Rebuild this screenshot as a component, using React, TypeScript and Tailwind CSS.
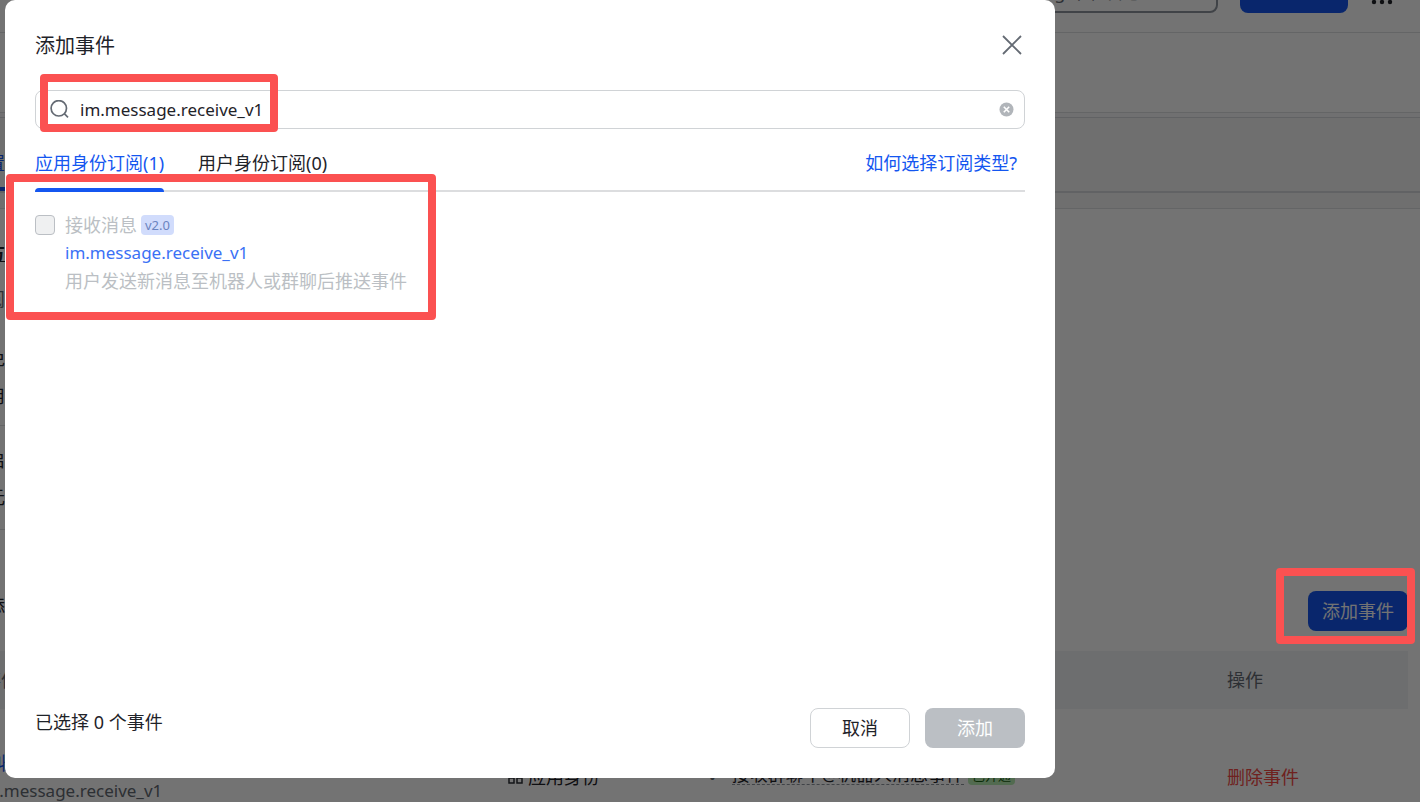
import React, { useState } from "react";

const Frame = ({ className }: { className: string }) => (
  <div aria-hidden="true" className={`pointer-events-none absolute rounded border-8 border-[#fb5151] ${className}`} />
);

function BackgroundPage() {
  return (
    <div className="-ml-[33px] flex min-h-screen flex-col text-[18px] leading-7 text-[#1f2329]">
      <header className="-mt-7 flex h-[61px] shrink-0 items-start justify-end border-b border-[#dee0e3] pr-6">
        <div className="flex h-[41px] w-[280px] items-center rounded-lg border-2 border-[#8f959e] px-3 pb-0.5 text-[#646a73]">
          <span className="flex-1 pl-[80px] whitespace-nowrap">bug 单和日志</span>
        </div>
        <button className="ml-[22px] h-[41px] w-[108px] rounded-lg bg-[#1456f0] pb-1 text-white">创建新版本</button>
        <button aria-label="更多" className="ml-5 flex h-[60px] w-7 items-center justify-center">
          <svg width="22" height="6" viewBox="0 0 22 6" fill="#1f2329">
            <circle cx="3" cy="3" r="2.2" />
            <circle cx="11" cy="3" r="2.2" />
            <circle cx="19" cy="3" r="2.2" />
          </svg>
        </button>
      </header>
      <div className="h-20 shrink-0 border-b border-[#dee0e3]" />
      <div className="h-1 shrink-0 bg-[#f8f9fa]" />
      <nav className="flex h-[76px] shrink-0 items-end border-y border-b-2 border-[#d8dadd] bg-[#f7f7f7] pl-0.5">
        <a href="#events" className="flex h-[42px] items-start border-b-4 border-[#1456f0] text-[#1456f0]">配置</a>
      </nav>
      <div className="h-4 shrink-0 border-b border-[#dee0e3] bg-[#f7f7f7]" />
      <main className="flex flex-1 flex-col pr-3">
        <div className="flex h-[442px] items-end justify-between pb-5">
          <div className="flex h-full flex-col self-start pt-[30px] pl-5 whitespace-nowrap">
            <h2 className="h-[46px] font-bold underline">方式</h2>
            <p className="h-[59px] text-[#646a73]">阅读</p>
            <p className="h-[38px]">免登</p>
            <p className="h-[43px]">用户</p>
            <p className="h-[38px] border-t border-[#dee0e3] pt-5">启用</p>
            <p className="mt-5 h-[47px] border-b border-[#dee0e3]">元素</p>
            <h2 className="mt-[62px]">添加</h2>
          </div>
          <button className="h-10 w-[100px] rounded-lg bg-[#1456f0] text-white">添加事件</button>
        </div>
        <table className="w-full table-fixed text-left">
          <colgroup>
            <col className="w-[525px]" />
            <col className="w-[225px]" />
            <col />
            <col className="w-[197px]" />
          </colgroup>
          <thead className="bg-[#f2f3f5]">
            <tr className="h-[58px] text-[#646a73]">
              <th className="pl-4 font-normal">事件名称</th>
              <th className="pl-4 font-normal">订阅类型</th>
              <th className="pl-4 font-normal">权限要求</th>
              <th className="pl-4 font-normal">操作</th>
            </tr>
          </thead>
          <tbody>
            <tr className="h-[136px] border-b border-[#dee0e3]">
              <td className="pl-3">
                <a href="#event" className="block text-[#1456f0]">接收消息</a>
                <span className="block text-[17px] text-[#646a73]">im.message.receive_v1</span>
              </td>
              <td className="pl-4">
                <span className="flex items-center gap-1">
                  <svg width="16" height="16" viewBox="0 0 16 16" fill="none" stroke="#2b2f36" strokeWidth="1.5">
                    <rect x="1" y="1" width="5" height="5" />
                    <rect x="9" y="1" width="5" height="5" />
                    <rect x="1" y="9" width="5" height="5" />
                    <rect x="9" y="9" width="5" height="5" />
                  </svg>
                  应用身份
                </span>
              </td>
              <td>
                <span className="flex items-center pb-1 leading-5 whitespace-nowrap">
                  <span className="-ml-2 pt-1 text-[#646a73]">•</span>
                  <span className="ml-4 border-b border-dashed border-[#8f959e]">接收群聊中@机器人消息事件</span>
                  <span className="ml-1 rounded bg-[#b7edb1] px-1 text-[13px] leading-5 text-[#186010]">已开通</span>
                </span>
              </td>
              <td className="pl-4">
                <button className="text-[#f54a45]">删除事件</button>
              </td>
            </tr>
          </tbody>
        </table>
      </main>
    </div>
  );
}

function AddEventDialog() {
  const [query, setQuery] = useState("im.message.receive_v1");
  return (
    <section
      role="dialog"
      aria-labelledby="dialog-title"
      className="relative flex w-full max-w-[1050px] flex-col rounded-[10px] bg-white px-[30px] pt-[30px] pb-[30px] text-[18px] leading-7 text-[#1f2329]"
    >
      <header className="flex h-[30px] items-center justify-between">
        <h1 id="dialog-title" className="self-end text-[20px]">添加事件</h1>
        <button aria-label="关闭" className="flex size-[26px] items-center justify-center">
          <svg width="20" height="20" viewBox="0 0 20 20" stroke="#646a73" strokeWidth="1.8" fill="none">
            <path d="M1 1L19 19M19 1L1 19" />
          </svg>
        </button>
      </header>
      <div className="mt-[30px] flex h-[39px] shrink-0 items-center rounded-lg border border-[#d0d3d6] pr-[10px] pl-[14px]">
        <svg width="20" height="20" viewBox="0 0 20 20" stroke="#646a73" strokeWidth="1.7" fill="none">
          <circle cx="8.8" cy="8.3" r="7.7" />
          <path d="M14.3 13.7L18 17.3" />
        </svg>
        <input
          aria-label="搜索事件"
          value={query}
          onChange={(e) => setQuery(e.target.value)}
          className="ml-[10px] min-w-0 flex-1 text-[17px] outline-none"
        />
        <button aria-label="清除" onClick={() => setQuery("")}>
          <svg width="15" height="15" viewBox="0 0 15 15">
            <circle cx="7.5" cy="7.5" r="7" fill="#b1b5ba" />
            <path d="M4.8 4.8L10.2 10.2M10.2 4.8L4.8 10.2" stroke="white" strokeWidth="1.6" />
          </svg>
        </button>
      </div>
      <nav className="mt-5 flex h-[43px] shrink-0 items-stretch gap-[34px] border-b-2 border-[#dcdddf]">
        <button className="-mb-0.5 flex items-start text-[#1456f0]">
          <span className="flex h-[43px] flex-col justify-between">
            应用身份订阅(1)
            <span className="h-1 rounded-t-[4px] bg-[#1456f0]" />
          </span>
        </button>
        <button className="flex items-start">用户身份订阅(0)</button>
        <a href="#types" className="mr-2 ml-auto text-[#1456f0]">如何选择订阅类型?</a>
      </nav>
      <div className="mt-[19px] flex flex-1 gap-[10px]">
        <input
          id="event-receive"
          type="checkbox"
          disabled
          className="mt-1 size-5 shrink-0 appearance-none rounded border border-[#bbbfc4] bg-[#eff0f1]"
        />
        <div className="text-[#bbbfc4]">
          <div className="flex items-center gap-1">
            <label htmlFor="event-receive">接收消息</label>
            <span className="rounded bg-[#d1dcfc] px-1 text-[13px] leading-5 text-[#6b84c0]">v2.0</span>
          </div>
          <a href="#receive" className="block text-[17px] text-[#3b71f5]">im.message.receive_v1</a>
          <p>用户发送新消息至机器人或群聊后推送事件</p>
        </div>
      </div>
      <footer className="flex items-center gap-[15px]">
        <p className="mr-auto pb-3">已选择 0 个事件</p>
        <button className="h-10 w-[100px] rounded-lg border border-[#d0d3d6]">取消</button>
        <button disabled className="h-10 w-[100px] rounded-lg bg-[#bbbfc4] text-white">添加</button>
      </footer>
      <Frame className="top-[74px] left-[35px] h-[58px] w-[238px]" />
      <Frame className="top-[174px] left-[1px] h-[146px] w-[430px]" />
    </section>
  );
}

export default function App() {
  return (
    <div className="relative h-screen overflow-hidden bg-white font-['Noto_Sans','Noto_Sans_CJK_SC',sans-serif]">
      <BackgroundPage />
      <div className="absolute inset-0 flex bg-black/55 pb-6 pl-[5px]">
        <AddEventDialog />
      </div>
      <Frame className="top-[568px] right-[5px] h-[76px] w-[139px]" />
    </div>
  );
}
